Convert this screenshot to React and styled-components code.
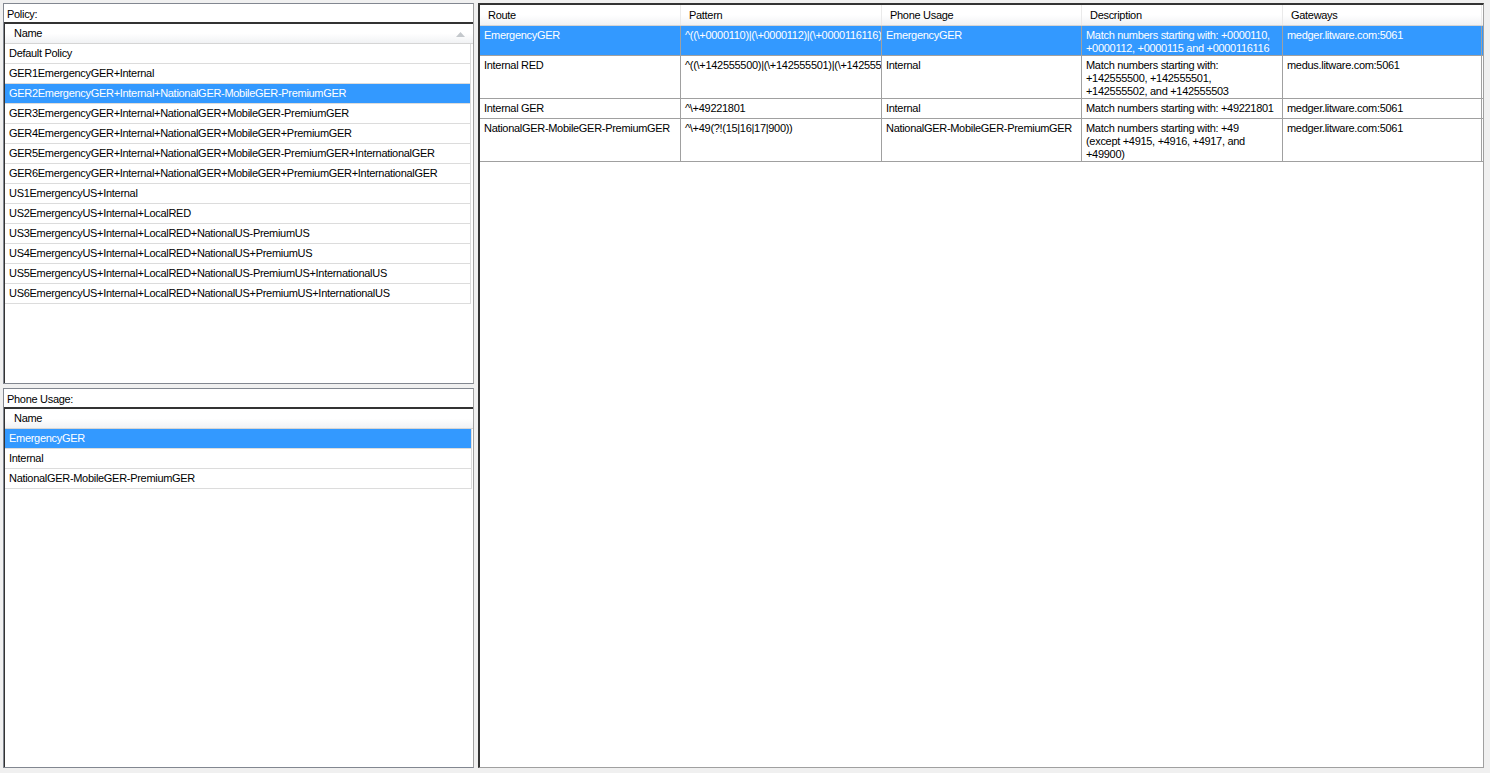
import React from "react";
import styled, { createGlobalStyle } from "styled-components";

const Global = createGlobalStyle`
  html, body { margin: 0; padding: 0; background: #f0f0f0; }
  body {
    font-family: "Liberation Sans", Arial, sans-serif;
    font-size: 11px;
    letter-spacing: -0.3px;
    color: #000;
  }
`;

const Page = styled.div`
  display: flex;
  gap: 4px;
  padding: 3px 6px 5px 3px;
  height: 773px;
  box-sizing: border-box;
`;

const LeftColumn = styled.div`
  width: 471px;
  display: flex;
  flex-direction: column;
  gap: 4px;
`;

const Panel = styled.div`
  flex: 1;
  display: flex;
  flex-direction: column;
  background: #fff;
  border: 1px solid #828790;
  border-right-color: #a0a0a0;
  min-height: 0;
`;

const PanelLabel = styled.div`
  height: 18px;
  line-height: 20px;
  padding: 0 3px;
  white-space: nowrap;
`;

const ListView = styled.div`
  flex: 1;
  display: flex;
  flex-direction: column;
  border-top: 2px solid #333;
  border-left: 1px solid #333;
  background: #fff;
  overflow: hidden;
`;

const ListHeader = styled.div`
  position: relative;
  height: 19px;
  line-height: 19px;
  padding-left: 9px;
  background: linear-gradient(#ffffff 0%, #ffffff 50%, #f1f2f4 100%);
  border-bottom: 1px solid #d5d5d5;
  flex-shrink: 0;
`;

const SortArrow = styled.svg`
  position: absolute;
  right: 8px;
  top: 8px;
`;

const ListBody = styled.div`
  flex: 1;
  display: flex;
  flex-direction: column;
`;

const ListRow = styled.div`
  height: 19px;
  line-height: 19px;
  padding-left: 4px;
  white-space: nowrap;
  border-bottom: 1px solid #dcdcdc;
  border-right: 1px solid #dcdcdc;
  width: ${(p) => p.$colWidth}px;
  box-sizing: content-box;
  background: ${(p) => (p.$selected ? "#3399ff" : "transparent")};
  color: ${(p) => (p.$selected ? "#fff" : "#000")};
`;

const RightPanel = styled.div`
  flex: 1;
  display: flex;
  flex-direction: column;
  background: #fff;
  border-top: 2px solid #333;
  border-left: 2px solid #333;
  border-right: 1px solid #a0a0a0;
  border-bottom: 1px solid #a0a0a0;
  min-width: 0;
`;

const cols = "201px 201px 200px 201px 199px";

const TableHeader = styled.div`
  display: grid;
  grid-template-columns: ${cols};
  height: 20px;
  background: linear-gradient(#ffffff 0%, #ffffff 50%, #f1f2f4 100%);
  border-bottom: 1px solid #d5d5d5;
`;

const HeaderCell = styled.div`
  line-height: 21px;
  padding-left: 8px;
  border-right: 1px solid #eaeaea;
  white-space: nowrap;
  overflow: hidden;
`;

const TableRow = styled.div`
  display: grid;
  grid-template-columns: ${cols};
  min-height: 19px;
  border-bottom: 1px solid #a0a0a0;
  background: ${(p) => (p.$selected ? "#3399ff" : "#fff")};
  color: ${(p) => (p.$selected ? "#fff" : "#000")};
`;

const Cell = styled.div`
  padding: 3px 3px 0 4px;
  line-height: 13px;
  border-right: 1px solid #a0a0a0;
  overflow: hidden;
  text-overflow: clip;
  white-space: nowrap;
`;

const Line = styled.div`
  white-space: nowrap;
`;

const policies = [
  "Default Policy",
  "GER1EmergencyGER+Internal",
  "GER2EmergencyGER+Internal+NationalGER-MobileGER-PremiumGER",
  "GER3EmergencyGER+Internal+NationalGER+MobileGER-PremiumGER",
  "GER4EmergencyGER+Internal+NationalGER+MobileGER+PremiumGER",
  "GER5EmergencyGER+Internal+NationalGER+MobileGER-PremiumGER+InternationalGER",
  "GER6EmergencyGER+Internal+NationalGER+MobileGER+PremiumGER+InternationalGER",
  "US1EmergencyUS+Internal",
  "US2EmergencyUS+Internal+LocalRED",
  "US3EmergencyUS+Internal+LocalRED+NationalUS-PremiumUS",
  "US4EmergencyUS+Internal+LocalRED+NationalUS+PremiumUS",
  "US5EmergencyUS+Internal+LocalRED+NationalUS-PremiumUS+InternationalUS",
  "US6EmergencyUS+Internal+LocalRED+NationalUS+PremiumUS+InternationalUS",
];

const usages = ["EmergencyGER", "Internal", "NationalGER-MobileGER-PremiumGER"];

const routes = [
  {
    route: "EmergencyGER",
    pattern: "^((\\+0000110)|(\\+0000112)|(\\+0000116116)|(\\+0000115))",
    usage: "EmergencyGER",
    desc: ["Match numbers starting with: +0000110,", "+0000112, +0000115 and +0000116116"],
    gw: "medger.litware.com:5061",
    selected: true,
  },
  {
    route: "Internal RED",
    pattern: "^((\\+142555500)|(\\+142555501)|(\\+142555502)|(\\+142555503))",
    usage: "Internal",
    desc: ["Match numbers starting with:", "+142555500, +142555501,", "+142555502, and +142555503"],
    gw: "medus.litware.com:5061",
  },
  {
    route: "Internal GER",
    pattern: "^\\+49221801",
    usage: "Internal",
    desc: ["Match numbers starting with: +49221801"],
    gw: "medger.litware.com:5061",
  },
  {
    route: "NationalGER-MobileGER-PremiumGER",
    pattern: "^\\+49(?!(15|16|17|900))",
    usage: "NationalGER-MobileGER-PremiumGER",
    desc: ["Match numbers starting with: +49", "(except +4915, +4916, +4917, and", "+49900)"],
    gw: "medger.litware.com:5061",
  },
];

function List({ items, selected, sortable }) {
  return (
    <ListView>
      <ListHeader>
        Name
        {sortable && (
          <SortArrow width="9" height="5" viewBox="0 0 9 5">
            <path d="M0 5 L4.5 0 L9 5 Z" fill="#c4c8cc" />
          </SortArrow>
        )}
      </ListHeader>
      <ListBody>
        {items.map((t, i) => (
          <ListRow key={t} $selected={i === selected} $colWidth={sortable ? 461 : 462}>
            {t}
          </ListRow>
        ))}
      </ListBody>
    </ListView>
  );
}

export default function App() {
  return (
    <>
      <Global />
      <Page>
        <LeftColumn>
          <Panel>
            <PanelLabel>Policy:</PanelLabel>
            <List items={policies} selected={2} sortable />
          </Panel>
          <Panel>
            <PanelLabel>Phone Usage:</PanelLabel>
            <List items={usages} selected={0} />
          </Panel>
        </LeftColumn>
        <RightPanel>
          <TableHeader>
            <HeaderCell>Route</HeaderCell>
            <HeaderCell>Pattern</HeaderCell>
            <HeaderCell>Phone Usage</HeaderCell>
            <HeaderCell>Description</HeaderCell>
            <HeaderCell>Gateways</HeaderCell>
          </TableHeader>
          {routes.map((r) => (
            <TableRow key={r.route} $selected={r.selected}>
              <Cell>{r.route}</Cell>
              <Cell>{r.pattern}</Cell>
              <Cell>{r.usage}</Cell>
              <Cell>
                {r.desc.map((l) => (
                  <Line key={l}>{l}</Line>
                ))}
              </Cell>
              <Cell>{r.gw}</Cell>
            </TableRow>
          ))}
        </RightPanel>
      </Page>
    </>
  );
}
